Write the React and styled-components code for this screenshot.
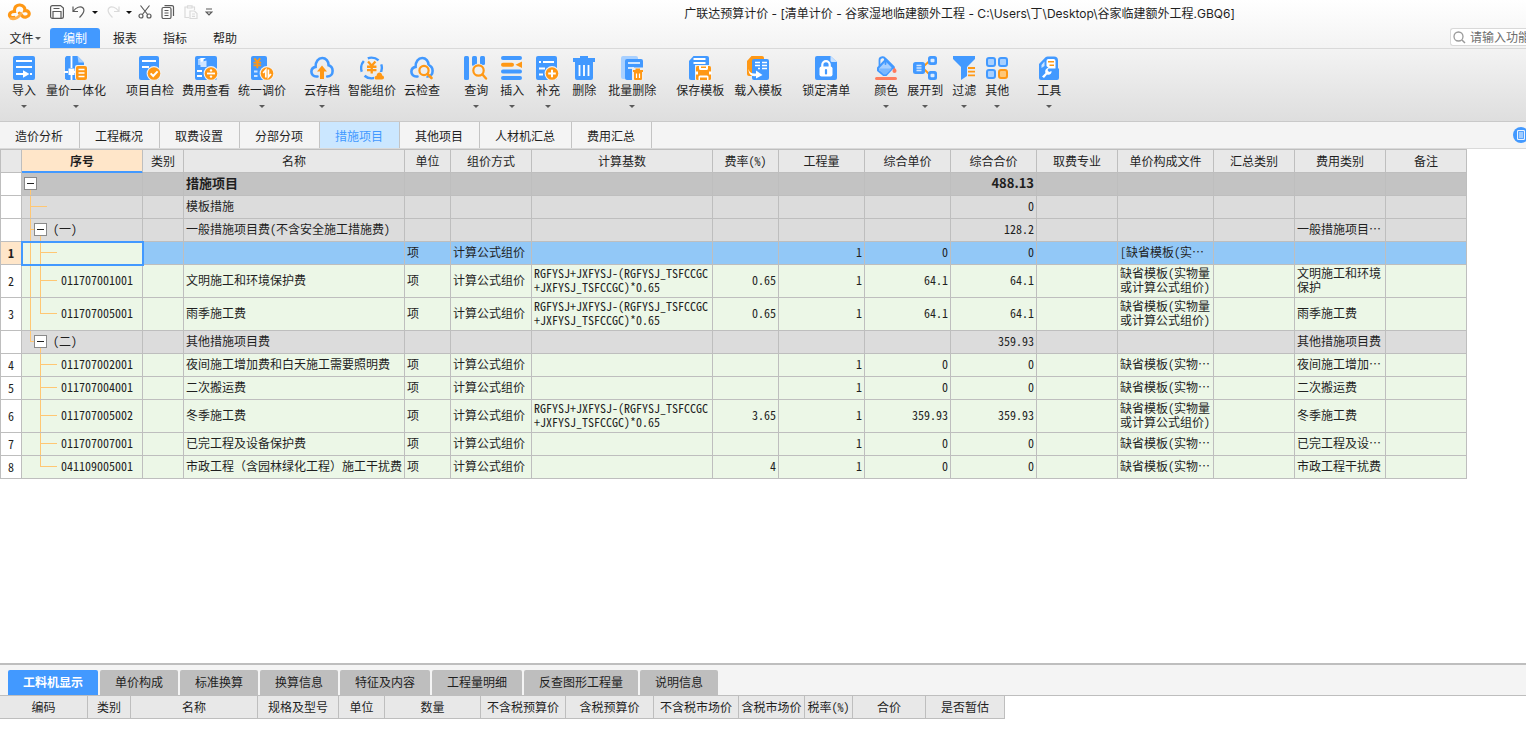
import React from "react";
import styled, { createGlobalStyle, css } from "styled-components";

const BLUE = "#4299ff";
const PALE = "#a8d0ff";
const ORANGE = "#ff9815";
const GUIDE = "#ffc773";
const LINE = "#bebebe";

const GlobalStyle = createGlobalStyle`
  * { box-sizing: border-box; }
  body {
    margin: 0;
    background: #fff;
    color: #1f1f1f;
    font-family: "Noto Sans CJK SC", sans-serif;
    font-size: 12px;
    line-height: 16px;
  }
  button, input { font: inherit; color: inherit; }
`;

const Window = styled.div`
  display: flex;
  flex-direction: column;
  min-height: 100vh;
  overflow: hidden;
`;

const plainButton = css`
  border: 0;
  padding: 0;
  background: none;
  white-space: nowrap;
`;

/* ---------- window header ---------- */

const Header = styled.header`
  background: linear-gradient(#ffffff, #f3f3f3);
  border-bottom: 1px solid #d9d9d9;
`;

const TitleBar = styled.div`
  display: flex;
  align-items: center;
  height: 28px;
  padding: 0 0 4px 7px;
`;

const QuickTools = styled.div`
  display: flex;
  align-items: center;
  margin-left: 18px;
`;

const QuickButton = styled.button`
  ${plainButton}
  display: flex;
  align-items: center;
  justify-content: center;
  width: 16px;
  height: 20px;
  margin-right: ${(p) => p.$after || 0}px;
  color: ${(p) => (p.$dim ? "#dadada" : "#5a5a5a")};
`;

const Title = styled.h1`
  flex: 1;
  margin: 0;
  padding: 4px 0 0 176px;
  font-size: 12px;
  line-height: 20px;
  font-weight: 400;
  font-family: Inter, "Noto Sans CJK SC", sans-serif;
  text-align: center;
  white-space: nowrap;
`;

const MenuRow = styled.div`
  display: flex;
  justify-content: space-between;
  height: 20px;
`;

const Menu = styled.nav`
  display: flex;
`;

const MenuButton = styled.button`
  ${plainButton}
  display: flex;
  align-items: center;
  justify-content: center;
  gap: 1px;
  width: 50px;
  border-radius: 3px 3px 0 0;
  background: ${(p) => (p.$active ? BLUE : "transparent")};
  color: ${(p) => (p.$active ? "#fff" : "inherit")};
`;

const Caret = styled.span`
  width: 0;
  height: 0;
  border: 3px solid transparent;
  border-bottom: 0;
  border-top-color: ${(p) => p.$color || "#5a5a5a"};
`;

const SearchBox = styled.label`
  display: flex;
  align-items: center;
  gap: 4px;
  width: 76px;
  height: 18px;
  padding-left: 2px;
  border: 1px solid #d9d9d9;
  border-right: 0;
  border-radius: 3px 0 0 3px;
  background: #fff;
`;

const SearchInput = styled.input`
  flex: 1;
  min-width: 0;
  height: 16px;
  padding: 0;
  border: 0;
  outline: 0;
  background: none;
  &::placeholder { color: #6e6e6e; opacity: 1; }
`;

/* ---------- ribbon ---------- */

const Ribbon = styled.div`
  display: flex;
  height: 73px;
  padding: 7px 0 0 12px;
  background: linear-gradient(#f3f3f3, #dedede);
  border-bottom: 1px solid #c9c9c9;
`;

const RibbonGroup = styled.div`
  display: flex;
  align-items: flex-start;
  gap: ${(p) => p.$gap}px;
  margin-right: ${(p) => p.$after}px;
`;

const RibbonButton = styled.button`
  ${plainButton}
  display: flex;
  flex-direction: column;
  align-items: center;
  svg { display: block; }
`;

const RibbonLabel = styled.span`
  margin: 2px 0 7px;
`;

/* ---------- sheet tabs ---------- */

const SheetBar = styled.div`
  display: flex;
  justify-content: space-between;
  align-items: stretch;
  height: 27px;
  background: #f4f4f4;
  border-bottom: 1px solid #dadada;
`;

const SheetTabs = styled.nav`
  display: flex;
`;

const SheetTab = styled.button`
  ${plainButton}
  padding: 2px 16px 0 15px;
  border-right: 1px solid #c4c4c4;
  background: ${(p) => (p.$active ? "#cbe7ff" : "transparent")};
  color: ${(p) => (p.$active ? BLUE : "inherit")};
`;

const SideButton = styled.button`
  ${plainButton}
  align-self: center;
  display: flex;
  align-items: center;
  justify-content: center;
  width: 16px;
  height: 16px;
  margin-right: -3px;
  border-radius: 50%;
  background: ${BLUE};
`;

/* ---------- grids ---------- */

const Workspace = styled.main`
  flex: 1;
`;

const Grid = styled.table`
  table-layout: fixed;
  width: ${(p) => p.$width}px;
  border-collapse: separate;
  border-spacing: 0;
  font-feature-settings: "hwid";
  line-height: 14px;
`;

const HeadCell = styled.th`
  height: 24px;
  padding: 0;
  border: 1px solid ${LINE};
  border-left: ${(p) => (p.$first ? `1px solid ${LINE}` : 0)};
  background: #e8e8e8;
  font-weight: 400;
  white-space: nowrap;
  overflow: hidden;
  ${(p) =>
    p.$active &&
    css`
      background: #ffe6c9;
      font-weight: 700;
      border-bottom-color: ${BLUE};
      box-shadow: inset 0 -1px ${BLUE};
    `}
`;

const rowFill = { total: "#c3c3c3", section: "#dcdcdc", selected: "#92c8f7", item: "#ecf7e7" };

const Row = styled.tr`
  height: ${(p) => (p.$tall ? 33 : 23)}px;
  background: ${(p) => rowFill[p.$kind]};
  ${(p) =>
    p.$kind === "total" &&
    css`
      font-weight: 700;
      font-size: 13px;
      font-feature-settings: normal;
    `}
`;

const Cell = styled.td`
  padding: 0 2px 2px;
  border-right: 1px solid ${LINE};
  border-bottom: 1px solid ${LINE};
  text-align: ${(p) => (p.$number ? "right" : "left")};
  white-space: pre;
  overflow: hidden;
  ${(p) => p.$fullWidth && "font-feature-settings: normal;"}
`;

const RowNumber = styled.th`
  padding: 0;
  border: 1px solid ${LINE};
  border-top: 0;
  background: ${(p) => (p.$current ? "#ffe6c9" : "#fff")};
  font-weight: ${(p) => (p.$current ? 700 : 400)};
`;

const guide = (x, y, w, h) =>
  `linear-gradient(${GUIDE}, ${GUIDE}) ${x}px ${y}px / ${w}px ${h} no-repeat`;

/* Connector lines of the tree; mid is the height of the row's own branch. */
const treeGuides = (tree, mid) =>
  ({
    root: [guide(8, mid, 1, "100%")],
    leafTop: [guide(8, 0, 1, "100%"), guide(8, mid, 17, "1px")],
    branch: [guide(8, 0, 1, "100%"), guide(8, mid, 5, "1px"), guide(18, mid, 1, "100%")],
    branchLast: [guide(8, 0, 1, `${mid}px`), guide(8, mid, 5, "1px"), guide(18, mid, 1, "100%")],
    leaf: [guide(8, 0, 1, "100%"), guide(18, 0, 1, "100%"), guide(18, mid, 17, "1px")],
    leafEnd: [guide(8, 0, 1, "100%"), guide(18, 0, 1, `${mid}px`), guide(18, mid, 17, "1px")],
    deep: [guide(18, 0, 1, "100%"), guide(18, mid, 17, "1px")],
    deepEnd: [guide(18, 0, 1, `${mid}px`), guide(18, mid, 17, "1px")],
  }[tree].join(", "));

const TreeCell = styled(Cell)`
  padding: 0 0 2px ${(p) => ({ root: 2, branch: 12, branchLast: 12 }[p.$tree] ?? 39)}px;
  background: ${(p) => treeGuides(p.$tree, p.$tall ? 15 : 10)};
  ${(p) =>
    p.$current &&
    css`
      position: relative;
      background-color: ${rowFill.item};
      outline: 2px solid ${BLUE};
      outline-offset: -1px;
    `}
`;

const TreeEntry = styled.div`
  display: flex;
  align-items: center;
  gap: 6px;
`;

const Toggle = styled.button`
  ${plainButton}
  display: flex;
  align-items: center;
  justify-content: center;
  width: 13px;
  height: 13px;
  border: 1px solid #8a8a8a;
  background: #fff;
  &::before {
    content: "";
    width: 7px;
    height: 1px;
    background: #222;
  }
`;

/* ---------- detail panel ---------- */

const DetailPanel = styled.section`
  min-height: 83px;
  border-top: 2px solid ${LINE};
`;

const DetailBar = styled.div`
  display: flex;
  align-items: flex-end;
  gap: 2px;
  height: 30px;
  padding-left: 8px;
  background: #f4f4f4;
  box-shadow: 0 1px ${LINE};
`;

const DetailTab = styled.button`
  ${plainButton}
  height: 25px;
  padding: 0 15px 2px;
  border-radius: 2px 2px 0 0;
  background: ${(p) => (p.$active ? BLUE : LINE)};
  color: ${(p) => (p.$active ? "#fff" : "inherit")};
  font-weight: ${(p) => (p.$active ? 700 : 400)};
`;

/* ---------- drawings ---------- */

const Svg = ({ children, w = 24, h = 24, ...rest }) => (
  <svg width={w} height={h} viewBox={`0 0 ${w} ${h}`} fill="none" aria-hidden="true" {...rest}>
    {children}
  </svg>
);

const Sheet = ({ x = 2, w = 20 }) => <rect x={x} y="0" width={w} height="24" rx="2" fill={BLUE} />;

const Stroke = ({ d, c = "#fff", w = 2, ...rest }) => <path d={d} stroke={c} strokeWidth={w} {...rest} />;

const Badge = ({ cx = 17, cy = 17.5, children }) => (
  <>
    <circle cx={cx} cy={cy} r="7.4" fill="#f1f1f1" />
    <circle cx={cx} cy={cy} r="6.3" fill={ORANGE} />
    {children}
  </>
);

const Cloud = () => (
  <Stroke
    c={BLUE}
    w={2.6}
    strokeLinecap="round"
    d="M7.5 20.5H6.2C3.4 20.5 1.4 18.4 1.4 15.8 1.4 13.2 3.2 11.3 5.6 10.9 5.4 5.8 8.3 2 12.2 2 15.9 2 18.7 5 18.6 9.2 20.9 9.9 22.6 12.2 22.6 14.9 22.6 18 20.6 20.5 17.2 20.5"
  />
);

const Yen = ({ x, y, s = 1 }) => (
  <g transform={`translate(${x} ${y}) scale(${s})`}>
    <Stroke c={ORANGE} w={2.2} d="M1 0.5 4.5 4.5 8 0.5M0 5.5H9M0 8.6H9M4.5 4.5V12" />
  </g>
);

const icons = {
  import: (
    <Svg>
      <Sheet x={1} w={22} />
      <Stroke d="M4 5h16M4 11h16" />
      <Stroke d="M4 18h8M18 18h2" />
      <path d="M11 14.2 17.5 18 11 21.8Z" fill="#fff" />
    </Svg>
  ),
  measure: (
    <Svg>
      <path d="M1 1.5 2.5 0H13v24H2.5L1 22.5Z" fill={BLUE} />
      <path d="M13 0h.5L20 6.5V9h-7Z" fill={BLUE} />
      <path d="M13.5 0 20 6.5h-5.5Z" fill={PALE} />
      <Stroke d="M7.5 0v12M7.5 19v5M0 16h4M10 16h3" w={1.8} />
      <rect x="4.5" y="12.5" width="6" height="6.5" fill="#fff" />
      <rect x="11" y="9" width="13" height="15" rx="2" fill="#f1f1f1" />
      <rect x="12" y="10" width="11" height="14" rx="2" fill={ORANGE} />
      <Stroke d="M14.5 13.5h6M14.5 17h6M14.5 20.5h6" w={1.6} />
    </Svg>
  ),
  check: (
    <Svg>
      <Sheet x={1} w={20} />
      <Stroke d="M4 5h14M4 11h7" />
      <Badge cx={16}><Stroke d="m12.6 17.4 2.6 2.6 4.4-4.6" /></Badge>
    </Svg>
  ),
  fee: (
    <Svg>
      <Sheet x={1} w={22} />
      <path d="M4 3.5 7 2h5l-2.5 1.5V9H4Z" fill="#fff" />
      <path d="M6.5 6 12.5 4.5V11h-6Z" fill="#cfe5ff" />
      <path d="M4 3.5h2.5V9H4Z" fill={PALE} />
      <Stroke d="M3 15h5M3 20h5" />
      <Badge>
        <Stroke d="M13 17.5h8" w={1.8} />
        <circle cx="17" cy="14.4" r="1.2" fill="#fff" />
        <circle cx="17" cy="20.6" r="1.2" fill="#fff" />
      </Badge>
    </Svg>
  ),
  adjust: (
    <Svg>
      <Sheet x={1} w={16} />
      <Yen x={3.5} y={2} s={0.85} />
      <Stroke d="M4 15.5h3.5M4 20h3.5" w={1.8} c="#cfe5ff" />
      <Badge>
        <Stroke d="M15.8 21.5V14l-2.6 3M18.4 13.5V21l2.6-3" w={1.7} />
      </Badge>
    </Svg>
  ),
  cloudSave: (
    <Svg>
      <Cloud />
      <path d="M12 9.5 17 15.5H14V23h-4V15.5H7Z" fill={ORANGE} />
    </Svg>
  ),
  smart: (
    <Svg>
      <circle cx="11.5" cy="12" r="10.4" stroke={BLUE} strokeWidth="2.4" strokeDasharray="11.5 4.8" strokeDashoffset="4" />
      <Yen x={7} y={5} s={1.05} />
      <rect x="14" y="16" width="10" height="8" fill="#ebebeb" />
      <path d="M16.5 23.5C14 23.5 13.8 20 16.6 19.7 17 15.5 22 15.5 22.2 19.6 24.8 20 24.5 23.5 22 23.5Z" fill={ORANGE} />
    </Svg>
  ),
  cloudCheck: (
    <Svg>
      <Cloud />
      <circle cx="14" cy="14.5" r="6.5" fill="#eeeeee" />
      <circle cx="14" cy="14.5" r="4.6" stroke={ORANGE} strokeWidth="2.2" />
      <Stroke d="m17.5 18 4 4" c={ORANGE} w={2.6} strokeLinecap="round" />
    </Svg>
  ),
  query: (
    <Svg>
      <rect x="0" y="0" width="5" height="24" rx="1.5" fill={BLUE} />
      <rect x="8" y="0" width="5" height="10" rx="1.5" fill={BLUE} />
      <rect x="16" y="0" width="5" height="9" rx="1.5" fill={BLUE} />
      <circle cx="14.5" cy="14.5" r="7" fill="#efefef" />
      <circle cx="14.5" cy="14.5" r="5.2" stroke={ORANGE} strokeWidth="2.2" />
      <Stroke d="m18.5 18.5 3.5 4" c={ORANGE} w={2.4} strokeLinecap="round" />
    </Svg>
  ),
  insert: (
    <Svg>
      <Stroke c={BLUE} w={4} strokeLinecap="round" d="M3 2h17M3 15.5h17M3 22h17" />
      <Stroke c={ORANGE} w={4} strokeLinecap="round" d="M3 8.800h9" />
      <path d="M15.5 8.8 22 5.5V12Z" fill={ORANGE} />
    </Svg>
  ),
  supplement: (
    <Svg>
      <Sheet x={0} w={21} />
      <Stroke d="M3 6h2M7 6h11M3 12.5h6M3 18.5h4" />
      <Badge cx={16}><Stroke d="M12.2 17.5h7.6M16 13.7v7.6" /></Badge>
    </Svg>
  ),
  remove: (
    <Svg>
      <path d="M8 0h8v2h7v4H1V2h7Z" fill={BLUE} />
      <path d="M3 5h18v17a2 2 0 0 1-2 2H5a2 2 0 0 1-2-2Z" fill={BLUE} />
      <Stroke d="M7.5 9v11M12 9v11M16.5 9v11" w={1.8} />
    </Svg>
  ),
  batchRemove: (
    <Svg>
      <rect x="1" y="0" width="17" height="23" rx="2" fill={PALE} />
      <rect x="5" y="3" width="18" height="21" rx="2" fill={BLUE} />
      <Stroke d="M8 7h12M8 12h6" w={1.8} c="#cfe5ff" />
      <path d="M12 11.5h12V24H12Z" fill="#eeeeee" />
      <path d="M15.5 12.500h4.500v1.500h3v2H13v-2h2.500ZM14 16h8v7a1 1 0 0 1-1 1h-6a1 1 0 0 1-1-1Z" fill={ORANGE} />
      <Stroke d="M16.500 17.500v4.500M19.500 17.500v4.500" w={1.2} />
    </Svg>
  ),
  saveTemplate: (
    <Svg>
      <path d="M1 5 5.500 0H19a2 2 0 0 1 2 2V24H3a2 2 0 0 1-2-2Z" fill={BLUE} />
      <Stroke d="M5.500 3h12M5.500 7h12" w={1.8} />
      <rect x="7" y="9" width="17" height="15" fill="#eeeeee" />
      <rect x="8" y="10" width="15" height="14" rx="1.500" fill={ORANGE} />
      <path d="M11 10h9v2.500q0 1.500-1.500 1.500h-6Q11 14 11 12.500ZM7.500 15.500h2.500v3H7.500ZM21 15.500h2.500v3H21ZM10.500 24v-3q0-1.500 1.500-1.500h7q1.500 0 1.500 1.500v3Z" fill="#fff" />
      <path d="M13 10.500h5v1.500h-5ZM12 21.500h7V24h-7Z" fill={ORANGE} />
    </Svg>
  ),
  loadTemplate: (
    <Svg>
      <path d="M1 5 5.500 0H16a2 2 0 0 1 2 2V20H3a2 2 0 0 1-2-2Z" fill={ORANGE} />
      <rect x="6" y="3" width="17" height="21" rx="2" fill={BLUE} />
      <Stroke d="M9 6.500h5M16 6.500h5M9 9.500h5M16 9.500h5M12 12.500h2M16 12.500h5" w={1.6} />
      <path d="M2.500 13C3.500 17 6 18 10 17.500V14.500L16.500 19 10 22.500V20C5.500 21 2.500 18 2.500 13Z" fill="#fff" />
    </Svg>
  ),
  lock: (
    <Svg>
      <path d="M3 0H16.500L23 6V22a2 2 0 0 1-2 2H3a2 2 0 0 1-2-2V2A2 2 0 0 1 3 0Z" fill={BLUE} />
      <path d="M16.500 0 23 6h-5a1.500 1.500 0 0 1-1.500-1.500Z" fill="#c9e2ff" />
      <Stroke d="M8.300 11V8.800a3.700 3.700 0 0 1 7.400 0V11" w={2.2} />
      <rect x="5.500" y="10.500" width="13" height="10" rx="2" fill="#fff" />
      <Stroke d="M12 14v3.500" c={BLUE} w={2.2} strokeLinecap="round" />
    </Svg>
  ),
  colour: (
    <Svg>
      <path d="M4 12 12 3.500 19.500 11 12 19H9.500L4 14.500Z" fill={PALE} stroke={BLUE} strokeWidth="2" strokeLinejoin="round" />
      <path d="M4.500 12.500H18L12 18.500H9.500Z" fill="#7ab8ff" />
      <path d="M11.500 3.500 19.500 11.500" stroke={BLUE} strokeWidth="2.600" strokeLinecap="round" />
      <path d="M5.500 9.500V4.500a3 3 0 0 1 6-.500V8" stroke={BLUE} strokeWidth="1.800" strokeLinecap="round" />
      <path d="M20.500 11.500c1.500 1.800 2 2.600 2 3.400a2 2 0 0 1-4 0c0-.800.500-1.600 2-3.400Z" fill="#ff7a5c" />
      <rect x="1" y="21" width="22" height="3" rx="1.500" fill="#ff7f5f" />
    </Svg>
  ),
  expand: (
    <Svg>
      <Stroke d="M11 10 17 4.500M11 13 17 19" c={ORANGE} w={1.8} />
      <rect x="0" y="6" width="12" height="12" rx="2.500" fill={BLUE} />
      <path d="M3.500 9.500h5M3.500 12h5M3.500 14.500h5" stroke="#cfe5ff" strokeWidth="1.300" />
      <rect x="15" y="0" width="9" height="9" rx="2.500" fill={BLUE} />
      <rect x="15" y="15" width="9" height="9" rx="2.500" fill={BLUE} />
      <rect x="17.500" y="2.800" width="4" height="3.500" rx="1" fill="#dbecff" />
      <rect x="17.500" y="17.800" width="4" height="3.500" rx="1" fill="#dbecff" />
    </Svg>
  ),
  filter: (
    <Svg>
      <path d="M1 0h22v3L15 11v9l-6 4V11L1 3Z" fill={BLUE} />
      <rect x="15" y="11" width="9" height="12" fill="#ececec" />
      <Stroke d="M16 12h7M16 15.700h7M16 19.400h7" c={ORANGE} w={1.8} />
    </Svg>
  ),
  other: (
    <Svg>
      <rect x="2" y="2" width="8" height="8" rx="2" fill={PALE} stroke={BLUE} strokeWidth="2" />
      <rect x="14" y="2" width="8" height="8" rx="2" fill={PALE} stroke={BLUE} strokeWidth="2" />
      <rect x="2" y="14" width="8" height="8" rx="2" fill={PALE} stroke={BLUE} strokeWidth="2" />
      <rect x="14" y="14" width="8" height="8" rx="2" fill="#ffc778" stroke={ORANGE} strokeWidth="2" />
    </Svg>
  ),
  tools: (
    <Svg>
      <path d="M2 8 8.500 1.200Q9.500.500 10.500.500H17a4 4 0 0 1 4 4V12.500h1v9.500a2 2 0 0 1-2 2H4a2 2 0 0 1-2-2Z" fill={BLUE} />
      <path d="M9.500 5A2 2 0 0 1 11 3h5.500a2 2 0 0 1 2 2V12.500H12L9.500 10Z" fill="#fff" />
      <path d="M4.500 9 7.500 5.500V10L4.500 12Z" fill="#cfe5ff" />
      <Stroke d="M11 5.800h6M12.500 9.300h4.500" c={ORANGE} w={1.6} />
      <path d="M5 20.500 8.500 17C7.500 14 9.500 11.500 12 12l-1.500 2 1.500 2 2.500-1C15 17.500 12.500 19.500 10 18.500L7 22Z" fill="#fff" />
    </Svg>
  ),
};

const Logo = () => (
  <Svg w={24} h={18}>
    <path
      d="M7 14.500C3.500 15.500 1.600 12.600 3 10.300 3.800 9 5.500 8.500 7.500 8.500 6.800 4 10 1.800 13 2 16.500 2.200 18.500 5 17.700 7.700 21 7.200 22.700 9.200 22 11.700 21.200 14.200 17.500 15 15.500 13.200L12.500 10.200"
      stroke={ORANGE}
      strokeWidth="3.200"
      strokeLinecap="round"
    />
    <path d="M4 15.500C8 16.500 12.500 14 14 10.500" stroke="#ffb04d" strokeWidth="2.800" strokeLinecap="round" />
  </Svg>
);

const line = { stroke: "currentColor", strokeWidth: 1.2 };

const QuickIcons = {
  save: (
    <Svg w={14} h={14}>
      <path d="M.600 2.500a1.900 1.900 0 0 1 1.900-1.900h8L13.400 3v8.500a1.900 1.900 0 0 1-1.900 1.900h-9a1.900 1.900 0 0 1-1.900-1.900ZM3 13V6.500h8V13M3.500 3.500h6" {...line} />
    </Svg>
  ),
  undo: (
    <Svg w={14} h={14}>
      <path d="M1 1.500V6.500H6M1.500 6C4 2.500 8.500.500 11 3c2.500 2.700 0 6-3.500 9.500" {...line} />
    </Svg>
  ),
  redo: (
    <Svg w={14} h={14}>
      <path d="M13 1.500V6.500H8M12.500 6C10 2.500 5.500.500 3 3c-2.500 2.700 0 6 3.500 9.500" {...line} />
    </Svg>
  ),
  cut: (
    <Svg w={14} h={14}>
      <path d="M2.500.500 10 10M11.500.500 4 10" {...line} />
      <circle cx="3" cy="11" r="2" {...line} />
      <circle cx="11" cy="11" r="2" {...line} />
    </Svg>
  ),
  copy: (
    <Svg w={14} h={14}>
      <rect x="1" y="2.500" width="9" height="11" rx="1.500" {...line} />
      <path d="M3.500.600H11a1.500 1.500 0 0 1 1.500 1.500V11M3.500 5.500h4M3.500 8h4M3.500 10.500h4" {...line} />
    </Svg>
  ),
  paste: (
    <Svg w={14} h={14}>
      <path d="M5 12.500H1V2H3.500M8 2h2.500V5M3.500.800h4.500V3h-4.500Z" {...line} />
      <path d="M6 6h4.500L13 8.500v5H6ZM8 9h3M8 11.300h3" {...line} />
    </Svg>
  ),
  more: (
    <Svg w={8} h={8}>
      <path d="M1 1h6M1.200 4h5.600L4 6.800Z" {...line} />
    </Svg>
  ),
};

/* ---------- content ---------- */

const ribbonGroups = [
  { gap: 10, after: 20, items: [["import", "导入", 1], ["measure", "量价一体化", 1]] },
  { gap: 8, after: 18, items: [["check", "项目自检"], ["fee", "费用查看"], ["adjust", "统一调价", 1]] },
  { gap: 8, after: 24, items: [["cloudSave", "云存档", 1], ["smart", "智能组价"], ["cloudCheck", "云检查"]] },
  {
    gap: 12,
    after: 20,
    items: [["query", "查询", 1], ["insert", "插入", 1], ["supplement", "补充", 1], ["remove", "删除"], ["batchRemove", "批量删除", 1]],
  },
  { gap: 10, after: 20, items: [["saveTemplate", "保存模板"], ["loadTemplate", "载入模板"]] },
  { gap: 8, after: 24, items: [["lock", "锁定清单"]] },
  { gap: 9, after: 28, items: [["colour", "颜色", 1], ["expand", "展开到", 1], ["filter", "过滤", 1], ["other", "其他", 1]] },
  { gap: 8, after: 0, items: [["tools", "工具", 1]] },
];

const sheetTabs = ["造价分析", "工程概况", "取费设置", "分部分项", "措施项目", "其他项目", "人材机汇总", "费用汇总"];

const columns = [
  ["", 22], ["序号", 121], ["类别", 41], ["名称", 221], ["单位", 46], ["组价方式", 81], ["计算基数", 181], ["费率(%)", 66],
  ["工程量", 86], ["综合单价", 86], ["综合合价", 86], ["取费专业", 81], ["单价构成文件", 96], ["汇总类别", 81], ["费用类别", 91], ["备注", 81],
];

const FORMULA = "RGFYSJ+JXFYSJ-(RGFYSJ_TSFCCGC\n+JXFYSJ_TSFCCGC)*0.65";
const FILE_FULL = "缺省模板(实物量\n或计算公式组价)";
const FILE_SHORT = "缺省模板(实物…";
const METHOD = "计算公式组价";

const rows = [
  { kind: "total", tree: "root", toggle: true, name: "措施项目", total: "488.13" },
  { kind: "section", tree: "leafTop", name: "模板措施", total: "0" },
  { kind: "section", tree: "branch", toggle: true, code: "(一)", name: "一般措施项目费(不含安全施工措施费)", total: "128.2", feeType: "一般措施项目…" },
  { kind: "selected", tree: "leaf", no: 1, unit: "项", method: METHOD, qty: "1", price: "0", total: "0", file: "[缺省模板(实…" },
  { kind: "item", tree: "leaf", no: 2, tall: true, code: "011707001001", name: "文明施工和环境保护费", unit: "项", method: METHOD, base: FORMULA, rate: "0.65", qty: "1", price: "64.1", total: "64.1", file: FILE_FULL, feeType: "文明施工和环境\n保护" },
  { kind: "item", tree: "leafEnd", no: 3, tall: true, code: "011707005001", name: "雨季施工费", unit: "项", method: METHOD, base: FORMULA, rate: "0.65", qty: "1", price: "64.1", total: "64.1", file: FILE_FULL, feeType: "雨季施工费" },
  { kind: "section", tree: "branchLast", toggle: true, code: "(二)", name: "其他措施项目费", total: "359.93", feeType: "其他措施项目费" },
  { kind: "item", tree: "deep", no: 4, code: "011707002001", name: "夜间施工增加费和白天施工需要照明费", unit: "项", method: METHOD, qty: "1", price: "0", total: "0", file: FILE_SHORT, feeType: "夜间施工增加…" },
  { kind: "item", tree: "deep", no: 5, code: "011707004001", name: "二次搬运费", unit: "项", method: METHOD, qty: "1", price: "0", total: "0", file: FILE_SHORT, feeType: "二次搬运费" },
  { kind: "item", tree: "deep", no: 6, tall: true, code: "011707005002", name: "冬季施工费", unit: "项", method: METHOD, base: FORMULA, rate: "3.65", qty: "1", price: "359.93", total: "359.93", file: FILE_FULL, feeType: "冬季施工费" },
  { kind: "item", tree: "deep", no: 7, code: "011707007001", name: "已完工程及设备保护费", unit: "项", method: METHOD, qty: "1", price: "0", total: "0", file: FILE_SHORT, feeType: "已完工程及设…" },
  { kind: "item", tree: "deepEnd", no: 8, code: "041109005001", name: "市政工程（含园林绿化工程）施工干扰费", unit: "项", method: METHOD, rate: "4", qty: "1", price: "0", total: "0", file: FILE_SHORT, feeType: "市政工程干扰费" },
];

const detailTabs = ["工料机显示", "单价构成", "标准换算", "换算信息", "特征及内容", "工程量明细", "反查图形工程量", "说明信息"];

const detailColumns = [
  ["编码", 88], ["类别", 43], ["名称", 127], ["规格及型号", 81], ["单位", 46], ["数量", 96], ["不含税预算价", 85],
  ["含税预算价", 88], ["不含税市场价", 85], ["含税市场价", 66], ["税率(%)", 48], ["合价", 73], ["是否暂估", 79],
];

const widthOf = (cols) => cols.reduce((sum, [, w]) => sum + w, 0);

const GridHead = ({ cols, active, edge }) => (
  <>
    <colgroup>
      {cols.map(([, w], i) => (
        <col key={i} width={w} />
      ))}
    </colgroup>
    <thead>
      <tr>
        {cols.map(([label], i) => (
          <HeadCell key={i} scope="col" $first={edge && i === 0} $active={label !== "" && label === active}>
            {label}
          </HeadCell>
        ))}
      </tr>
    </thead>
  </>
);

const ItemRow = ({ row }) => {
  const current = row.kind === "selected";
  return (
    <Row $kind={row.kind} $tall={row.tall}>
      <RowNumber scope="row" $current={current}>{row.no}</RowNumber>
      <TreeCell $tree={row.tree} $tall={row.tall} $current={current}>
        <TreeEntry>
          {row.toggle && <Toggle aria-label="折叠" />}
          {row.code}
        </TreeEntry>
      </TreeCell>
      <Cell />
      <Cell $fullWidth={row.name?.includes("（")}>{row.name}</Cell>
      <Cell>{row.unit}</Cell>
      <Cell>{row.method}</Cell>
      <Cell>{row.base}</Cell>
      <Cell $number>{row.rate}</Cell>
      <Cell $number>{row.qty}</Cell>
      <Cell $number>{row.price}</Cell>
      <Cell $number>{row.total}</Cell>
      <Cell />
      <Cell>{row.file}</Cell>
      <Cell />
      <Cell>{row.feeType}</Cell>
      <Cell />
    </Row>
  );
};

export default function App() {
  return (
    <Window lang="zh-CN">
      <GlobalStyle />
      <Header>
        <TitleBar>
          <Logo />
          <QuickTools>
            <QuickButton aria-label="保存" $after={6}>{QuickIcons.save}</QuickButton>
            <QuickButton aria-label="撤销">{QuickIcons.undo}</QuickButton>
            <QuickButton aria-label="撤销列表" $after={2}><Caret $color="#111" /></QuickButton>
            <QuickButton aria-label="恢复" $dim>{QuickIcons.redo}</QuickButton>
            <QuickButton aria-label="恢复列表"><Caret $color="#111" /></QuickButton>
            <QuickButton aria-label="剪切" $after={7}>{QuickIcons.cut}</QuickButton>
            <QuickButton aria-label="复制" $after={7}>{QuickIcons.copy}</QuickButton>
            <QuickButton aria-label="粘贴" $dim $after={2}>{QuickIcons.paste}</QuickButton>
            <QuickButton aria-label="更多">{QuickIcons.more}</QuickButton>
          </QuickTools>
          <Title>广联达预算计价 - [清单计价 - 谷家湿地临建额外工程 - C:\Users\丁\Desktop\谷家临建额外工程.GBQ6]</Title>
        </TitleBar>
        <MenuRow>
          <Menu>
            <MenuButton>文件<Caret /></MenuButton>
            <MenuButton $active>编制</MenuButton>
            <MenuButton>报表</MenuButton>
            <MenuButton>指标</MenuButton>
            <MenuButton>帮助</MenuButton>
          </Menu>
          <SearchBox>
            <Svg w={13} h={13}>
              <circle cx="5.500" cy="5.500" r="4.500" stroke="#9a9a9a" strokeWidth="1.300" />
              <path d="m9 9 3 3" stroke="#9a9a9a" strokeWidth="1.500" />
            </Svg>
            <SearchInput type="text" aria-label="搜索" placeholder="请输入功能" />
          </SearchBox>
        </MenuRow>
      </Header>

      <Ribbon>
        {ribbonGroups.map((group, i) => (
          <RibbonGroup key={i} $gap={group.gap} $after={group.after}>
            {group.items.map(([icon, label, menu]) => (
              <RibbonButton key={icon}>
                {icons[icon]}
                <RibbonLabel>{label}</RibbonLabel>
                {menu && <Caret />}
              </RibbonButton>
            ))}
          </RibbonGroup>
        ))}
      </Ribbon>

      <SheetBar>
        <SheetTabs>
          {sheetTabs.map((tab) => (
            <SheetTab key={tab} $active={tab === "措施项目"}>{tab}</SheetTab>
          ))}
        </SheetTabs>
        <SideButton aria-label="侧栏">
          <Svg w={8} h={10}>
            <path d="M.600.600h6.800v8.800H.600ZM2 3h4M2 5h4M2 7h4" stroke="#fff" strokeWidth="1" />
          </Svg>
        </SideButton>
      </SheetBar>

      <Workspace>
        <Grid $width={widthOf(columns)}>
          <GridHead cols={columns} active="序号" edge />
          <tbody>
            {rows.map((row, i) => (
              <ItemRow key={i} row={row} />
            ))}
          </tbody>
        </Grid>
      </Workspace>

      <DetailPanel>
        <DetailBar>
          {detailTabs.map((tab, i) => (
            <DetailTab key={tab} $active={i === 0}>{tab}</DetailTab>
          ))}
        </DetailBar>
        <Grid $width={widthOf(detailColumns)}>
          <GridHead cols={detailColumns} />
        </Grid>
      </DetailPanel>
    </Window>
  );
}
